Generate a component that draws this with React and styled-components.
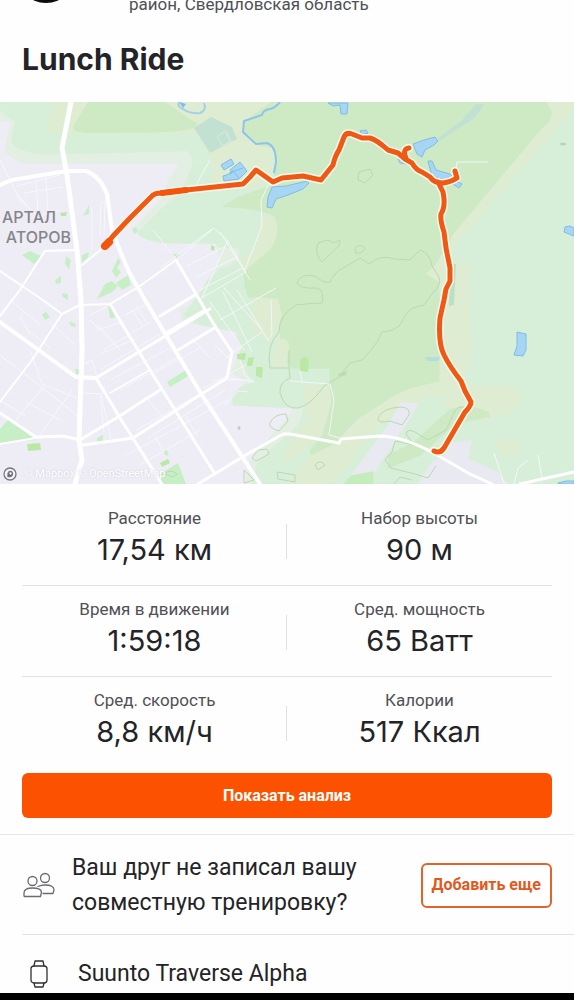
import React from "react";
import styled, { createGlobalStyle } from "styled-components";

const stats = [
  { label: "Расстояние", value: "17,54 км" },
  { label: "Набор высоты", value: "90 м" },
  { label: "Время в движении", value: "1:59:18" },
  { label: "Сред. мощность", value: "65 Ватт" },
  { label: "Сред. скорость", value: "8,8 км/ч" },
  { label: "Калории", value: "517 Ккал" },
];

const routePath =
  "M104 247 L113 236 L130 218 L151 197 Q154 193 161 193 L186 190 L243 184 L250 177 L256 170 L273 182 L282 178 L303 176 L321 180 L333 165 Q335 156 339 150 L344 137 Q346 132 352 134 L362 138 L370 138 Q377 140 388 150 L398 153 L405 159 L412 163 Q416 170 422 172 L430 177 Q434 183 443 183 Q451 182 457 178 L455 171 M406 158 Q402 149 409 148 M438 182 L443 192 Q446 206 441 214 Q440 220 444 232 L446 248 L450 268 L450 281 L446 289 L444 300 L440 318 Q438 343 444 355 Q450 367 461 381 L465 391 L471 402 Q471 406 465 412 L444 448 Q440 454 434 451";

function RouteMap() {
  return (
    <MapSvg viewBox="0 102 574 382" role="img" aria-label="Lunch Ride">
      <rect x="0" y="102" width="574" height="382" fill="#d7efd9" />

      {/* land cover */}
      <g transform="translate(0 102) scale(0.366 0.3333)">
        <path
          d="M145 0H760L745 190L740 240L640 290L605 315L755 345Q770 400 740 450L660 515L640 570L590 560L600 500L690 440L700 340Q690 320 605 315L580 300V175Q560 155 555 110L530 95H150Q125 90 130 70Z"
          fill="#deedd1"
        />
        <path
          d="M545 265L660 255L715 270L640 290L605 315L715 325L700 440L640 480L650 390L540 375Q450 370 450 350Q460 330 505 290Z"
          fill="#d7efd9"
        />
        <path
          d="M240 0H450L540 65Q540 90 400 92L240 93Q195 90 200 75Z"
          fill="#ceeac5"
        />
        <path
          d="M740 0H1495L1508 30Q1510 60 1480 80L1240 395L1190 490L1165 515L1200 540L1205 690Q1205 760 1230 835Q1130 850 1080 880L980 950Q930 1000 925 1020L910 1060H850L845 1045L880 1000L905 900L790 790L760 760Q770 700 760 600L640 580L665 510L740 440Q770 390 750 345Q720 320 605 315L650 285L740 250L755 190L750 140L705 130L665 90L665 60Z"
          fill="#ceeac5"
        />
        <path
          d="M1568 20L1235 440L1225 500L1260 480Q1285 480 1280 520L1285 700Q1295 760 1275 800L1260 845L1400 855Q1440 870 1420 910Q1380 960 1240 965L1200 860L1205 600L1200 540L1165 515L1190 490L1240 395L1480 80Q1510 60 1508 30L1495 0H1568Z"
          fill="#deedd1"
        />
        <path
          d="M1230 835Q1130 850 1080 880L980 950L925 1020L850 1060L780 1149H900L960 1080Q1010 1000 1060 950Q1100 900 1240 870Z"
          fill="#deedd1"
        />
        <path
          d="M1285 910L1335 930L1340 945L1245 965L1150 1060L1060 1100V1060L1130 1020L1230 920Z"
          fill="#ceeac5"
        />
        <path
          d="M0 25L40 60L30 110Q30 150 130 158L500 148Q530 150 525 190L500 260Q400 360 370 400Q400 420 470 425L650 440Q660 480 640 480L560 540Q530 570 550 590L500 640L560 680L650 690L640 740L690 840L630 870L640 920L830 915L815 970L740 1040L700 1090L690 1149H0Z"
          fill="#e4efe4"
        />
        <path
          d="M0 60H30L10 150L60 185H485Q490 190 460 230L440 290L370 370Q360 410 450 425H590L600 470L560 545L545 600L490 620L500 660L600 680L640 690L660 740L630 810L670 840L635 880L630 910L800 920Q780 960 740 1000L680 1080L670 1149H0Z"
          fill="#eeedf6"
        />
        <path
          d="M600 500L660 480L670 560L690 640L740 640L735 800H900V880L830 915H690L700 780L640 680L500 640L560 550Z"
          fill="#d7efd9"
        />
        <path d="M690 585L760 590L770 640L740 720L690 680Z" fill="#deedd1" />
        <path d="M755 715Q790 700 790 740L780 800H740Z" fill="#deedd1" />
        <path
          d="M830 850H900L905 900L880 1000L790 1080H770L790 1020L840 960Z"
          fill="#deedd1"
        />
        <path
          d="M1350 1020Q1385 1000 1420 1015Q1430 1060 1370 1060Z"
          fill="#deedd1"
        />
        <path
          d="M1095 900L1145 905L1120 950L1000 1149H940L1060 970Z"
          fill="#e9eaf1"
        />
        <path
          d="M1215 1060L1230 1020L1290 1015L1280 1070L1360 1110L1390 1149H1140L1180 1080Z"
          fill="#e9eaf1"
        />
        <path d="M935 1149L960 1120L1020 1108V1149Z" fill="#c5edbc" />
      </g>

      {/* parks and yards */}
      <g fill="#c6efc5">
        <path d="M0 429L8 420L32 437L36 440L0 443Z" />
        <path d="M22 255L30 251L41 256L34 264Z" />
        <path d="M66 256L71 260L69 269L65 264Z" />
        <path d="M55 280L61 276L61 283L56 284Z" />
        <path d="M83 216L89 205L89 214Z" />
        <path d="M62 293L68 294L68 300L63 297Z" />
        <path d="M42 314L46 312L50 317L45 320Z" />
        <path d="M69 322L75 323L76 327L71 326Z" />
        <path d="M82 255L89 252L88 257L82 263Z" />
        <path d="M97 299L105 284L112 281L118 286L112 292Z" />
        <path d="M112 271L118 258L121 262L117 268L121 272L116 278Z" />
        <path d="M116 283L128 275L131 285L122 290Z" />
        <path d="M108 306H112L115 318H110Z" />
        <path d="M167 382L186 370L190 375L170 387Z" />
        <path d="M160 474L178 463L186 484H160Z" />
        <path d="M163 451L166 449L169 454L166 456Z" />
        <path d="M132 229L136 227L138 231L134 234Z" />
        <path d="M172 254L180 254L176 259Z" />
        <path d="M75 369H79V374H76Z" />
        <path d="M97 438L103 435V441L97 442Z" />
      </g>
      <g fill="#b9e9a4">
        <path d="M27 444L40 443L41 450L28 451Z" />
        <path d="M160 463L168 459L170 463L162 467Z" />
        <path d="M237 354L246 353L245 360L237 359Z" />
        <path d="M248 358L254 357L252 366L247 366Z" />
        <path d="M256 367L263 367L262 378L256 376Z" />
        <path d="M60 213L67 212L66 216L61 216Z" />
        <path d="M211 245L215 247L214 251L211 250Z" />
        <path d="M300 360Q305 354 309 360L308 372L300 371Z" />
      </g>

      {/* ponds and streams */}
      <g fill="#c3e1d3">
        <path d="M194 128L211 117L232 127L237 139L210 153Z" />
        <path d="M450 264L456 264L454 305L449 306Z" fill="#bddfc5" />
        <path d="M476 104H484Q478 118 462 126L440 141L438 138L460 122Z" />
        <path d="M425 357L440 357L438 361L428 361Z" fill="#b5dcdf" />
      </g>
      <path
        d="M217 136L226 131L231 141L222 146ZM226 133L230 141"
        fill="none"
        stroke="#d7ebd8"
      />
      <g fill="#a7d6f5" stroke="#80bce9">
        <path d="M221 165L231 159L234 164L224 170Z" />
        <path d="M230 170L240 162L247 171L239 179L224 181L223 176L232 173Z" />
        <path d="M232 170L239 178M229 173L243 168" />
        <path d="M267 207L268 197L272 187L286 186L307 181L309 183L303 189L288 195L276 199L272 208Z" />
        <path d="M360 131L366 130L368 133L362 135Z" />
        <path d="M328 103L348 103L347 114L341 114L340 105L333 106Z" />
        <path d="M413 144L424 140L435 137L438 141L434 145L425 150L422 157L417 154Z" />
        <path d="M428 161L432 161L436 170L450 174L458 182L462 184L459 188L450 182L432 176Z" />
        <path d="M398 159L406 159L407 164L400 163Z" />
        <path d="M565 227L570 226L574 228V236L564 232Z" />
        <path d="M517 332L526 334V350L523 356L514 355L517 346Z" />
        <path d="M558 483L566 481H574V484H558Z" />
      </g>
      <path
        d="M280 102Q275 108 270 109Q263 110 262 115L244 121L243 132L256 144L267 143Q276 146 276 162L274 173"
        fill="none"
        stroke="#8fc4ea"
        strokeWidth="2"
      />
      <path
        d="M179 102Q177 107 183 109Q190 114 200 113Q207 110 204 103"
        fill="none"
        stroke="#a3d0e8"
        strokeWidth="2"
      />
      <path d="M179 102L186 104L183 108Z" fill="#80bce9" />

      {/* contour lines */}
      <g fill="none" stroke="#bcd7b5">
        <path d="M289 350V368H270Q266 345 279 332Q279 315 296 305Q312 303 322 303Q324 298 321 290L316 288Q300 289 297 283Q300 273 315 276Q325 284 330 282Q335 272 340 270L360 258Q366 262 369 264Q380 254 395 259L410 260L420 250Q430 253 432 266L439 277Q442 285 432 294L424 305L413 308Q406 312 400 325Q392 332 382 332L377 342Q372 350 362 360L350 363L338 378L324 386Q310 406 298 408Q285 410 280 393Q279 382 290 378L289 368" />
        <path d="M318 243L328 240L334 243L340 240L339 246L328 256L322 262Q314 254 318 243Z" />
        <path d="M355 248Q359 243 365 248Q363 254 356 253Z" />
        <path d="M359 172L370 169L373 175L365 183L358 180Z" />
        <path d="M378 418Q382 408 401 407Q411 408 409 415L402 425L390 421Q377 424 378 418Z" />
        <path d="M406 434Q407 428 415 432L428 440L446 430L454 413Q458 404 466 408M406 434L414 445L395 441L392 452L385 460L391 468L415 474L428 478L436 466" />
        <path d="M315 465Q320 459 325 465L318 470Z" />
        <path d="M270 423Q274 414 286 414L288 421L279 431Q268 428 270 423Z" />
        <path d="M252 458L258 450L267 449L269 454L256 461Z" />
        <path d="M244 470L254 480L244 483Z" />
        <path d="M277 472L295 475V482L278 479ZM394 484L400 477L412 480" />
        <path d="M165 474Q170 468 177 474L173 477Z" />
      </g>
      <path d="M338 374L347 371L346 375L340 377Z" fill="#b7ddb0" />
      <ellipse cx="239" cy="428" rx="1.5" ry="2" fill="#c9cbd1" />
      <ellipse cx="563" cy="144" rx="3" ry="1.5" fill="#b9d4ba" />

      {/* side streets */}
      <g fill="none" stroke="#fafaff" strokeWidth="1" opacity="0.8">
        <path d="M0 160L20 200L38 216L60 210M18 196L28 206M17 186L60 175M36 180L38 213M46 178L48 212M24 193L63 187" />
        <path d="M92 250V208M100 236L101 203L107 200M104 236L105 202M210 160L196 185M268 185L261 200L262 226L244 272" />
        <path d="M153 230L177 260L214 228L227 240L246 272L200 299M212 229L160 268M220 232L250 280M202 298L228 240M187 266L226 246M196 277L237 257M200 290L243 268" />
        <path d="M210 302L244 350M223 292L252 352M237 290L268 340L272 335L271 300M240 360L245 376L254 382L230 378M225 358L262 332M220 320L276 288M224 288L262 330" />
        <path d="M90 315L110 305L140 285M90 320L120 350M97 330L122 322M104 350L150 322M100 354L138 338M100 370L160 334M110 380L170 348M115 342L98 325M125 315L145 305M132 310L142 325M136 306L146 322" />
        <path d="M82 365L92 360L98 380M83 393L101 394L111 438M100 396L104 432M72 390L40 435M30 350L42 384L82 400M0 355L30 378L78 416M45 385L16 420M26 402L60 420M0 400L25 416" />
        <path d="M120 390L180 356M150 375L200 348M137 430L215 385M148 438L225 390M127 455L228 400M140 465L200 430M155 437L164 452M185 415L197 436M145 396L165 420M215 345L232 362M192 338L210 358M225 405L238 391L248 392M204 388L246 365M212 380L250 380" />
        <path d="M20 316L30 335M28 330L50 348M10 300L40 325M50 322L75 345" />
        <path d="M302 381L300 371M290 381L330 384L334 400L329 435L340 438M455 174L457 162H488" />
        <path d="M494 453L504 483M538 455L542 478M528 460L518 468L514 484" />
      </g>

      {/* main streets */}
      <g
        fill="none"
        stroke="#ffffff"
        strokeLinejoin="round"
        strokeLinecap="round"
      >
        <path
          d="M71 102L62 148L67 175L77 250L81 300L82 350L79 440L82 460L75 484"
          strokeWidth="5"
        />
        <path
          d="M0 185L12 180L67 171H86Q100 176 107 194L112 230Q120 252 130 274L145 300L200 392L260 484"
          strokeWidth="4"
        />
        <path d="M0 322L76 377L96 378" strokeWidth="4" />
        <path d="M96 378L152 344L210 309" strokeWidth="3" />
        <path d="M0 413L36 437L63 436L80 440L118 417L160 390" strokeWidth="3" />
        <path d="M0 444L36 438" strokeWidth="2" />
        <path
          d="M0 316L20 290L45 251L78 250M0 271L40 298L62 314L32 360L0 402M62 314L80 305L110 304L140 286L176 260M82 265L104 247"
          strokeWidth="2"
        />
        <path
          d="M176 260L196 294L216 328L232 352L227 378L200 395L133 438L83 445M96 378L120 418L162 484M110 304L150 370L215 474M160 316L195 295M166 333L205 310M178 350L216 327"
          strokeWidth="3"
        />
        <path d="M110 393L150 370" strokeWidth="2" />
        <path
          d="M198 484L244 456L283 434L290 434L339 443L341 439L380 436Q400 436 430 451L470 474L492 484M520 484L574 472"
          strokeWidth="3"
        />
      </g>

      <MapLabel x="56" y="223">
        АРТАЛ
      </MapLabel>
      <MapLabel x="71" y="243">
        АТОРОВ
      </MapLabel>

      <g fill="none" strokeLinecap="round" strokeLinejoin="round">
        <path d={routePath} stroke="#fff8ee" strokeWidth="8" />
        <path d={routePath} stroke="#ee5a14" strokeWidth="5" />
        <path d="M105 246L109 242" stroke="#f4550c" strokeWidth="8" />
        <path d="M162 193L186 190" stroke="#f4550c" strokeWidth="6" />
      </g>
    </MapSvg>
  );
}

function FriendsIcon() {
  return (
    <Icon width="34" height="26" viewBox="0 0 34 26" $color="#6a6a70">
      <circle cx="10.5" cy="9" r="4.5" />
      <circle cx="23" cy="6" r="4.5" />
      <path d="M2 24V21Q2 16 10.5 16T19.5 20L18.5 24.5H2.5Z" />
      <path d="M16 14.5Q19 13 23 13Q32 13 32 18L31 21.5H21" />
    </Icon>
  );
}

function WatchIcon() {
  return (
    <Icon width="20" height="28" viewBox="0 0 20 28" $color="#303035">
      <rect x="2" y="6" width="16" height="17" rx="3" />
      <path d="M5 6L6 1H14L15 6M5 23L6 27H14L15 23" />
    </Icon>
  );
}

function MapboxMark() {
  return (
    <Icon width="14" height="14" viewBox="0 0 14 14" $color="#77777c">
      <circle cx="7" cy="7" r="6" fill="#f4f4f8" />
      <path d="M5 9.5Q4.5 5 7 4.5T9.5 7T5 9.5Z" fill="#66666b" />
      <circle cx="7.5" cy="6.5" r="0.5" stroke="#ffffff" />
    </Icon>
  );
}

function App() {
  return (
    <Page>
      <GlobalStyle />
      <Header>
        <Avatar />
        <Place>район, Свердловская область</Place>
      </Header>
      <Title>Lunch Ride</Title>

      <MapBox>
        <RouteMap />
        <Attribution>
          <MapboxMark />
          <span>© Mapbox © OpenStreetMap</span>
        </Attribution>
      </MapBox>

      <Stats>
        {stats.map((stat) => (
          <Stat key={stat.label}>
            <Label>{stat.label}</Label>
            <Value>{stat.value}</Value>
          </Stat>
        ))}
      </Stats>

      <Analysis>
        <Button $primary>Показать анализ</Button>
      </Analysis>

      <FriendRow>
        <FriendsIcon />
        <FriendText>Ваш друг не записал вашу совместную тренировку?</FriendText>
        <Button>Добавить еще</Button>
      </FriendRow>
      <DeviceRow>
        <WatchIcon />
        <Device>Suunto Traverse Alpha</Device>
      </DeviceRow>
      <SystemBar />
    </Page>
  );
}

const GlobalStyle = createGlobalStyle`
  * {
    box-sizing: border-box;
  }

  body {
    margin: 0;
    background: #fefefe;
  }
`;

const Page = styled.main`
  font-family: Roboto, sans-serif;
  color: #242428;
  overflow: hidden;
`;

const Header = styled.header`
  display: flex;
  align-items: flex-end;
  gap: 53px;
  height: 16px;
  padding: 0 16px;
`;

const Avatar = styled.div`
  flex: none;
  width: 60px;
  height: 60px;
  margin-bottom: 13px;
  border-radius: 50%;
  background: #0c0c0e;
`;

const Place = styled.p`
  margin: 0;
  font-size: 17px;
  line-height: 24px;
  color: #505055;
`;

const Title = styled.h1`
  margin: 24px 22px;
  font-family: Inter, sans-serif;
  font-weight: 700;
  font-size: 30px;
  line-height: 38px;
`;

const MapBox = styled.section`
  position: relative;
`;

const MapSvg = styled.svg`
  display: block;
  width: 100%;
  height: auto;
`;

const MapLabel = styled.text`
  font-family: Inter, sans-serif;
  font-weight: 500;
  font-size: 16px;
  text-anchor: end;
  fill: #85858a;
`;

const Attribution = styled.div`
  position: absolute;
  left: 3px;
  bottom: 2px;
  display: flex;
  align-items: center;
  gap: 7px;
  font-size: 11px;
  line-height: 16px;
  color: #ffffff;
  text-shadow: 0 0 2px #c8c8d0;
`;

const Stats = styled.section`
  display: grid;
  grid-template-columns: 1fr 1fr;
  margin: 11px 22px 0;
`;

const Stat = styled.div`
  position: relative;
  padding: 11px 0 15px;
  text-align: center;
  border-bottom: 1px solid #e2e2e5;

  &:nth-last-child(-n + 2) {
    padding-bottom: 5px;
    border-bottom: none;
  }

  &:nth-child(odd)::after {
    content: "";
    position: absolute;
    top: 29px;
    right: 0;
    width: 1px;
    height: 35px;
    background: #dfdfe3;
  }
`;

const Label = styled.div`
  font-size: 17px;
  line-height: 24px;
  color: #505055;
`;

const Value = styled.div`
  font-family: Inter, Roboto, sans-serif;
  font-size: 29px;
  line-height: 40px;
`;

const Analysis = styled.div`
  display: grid;
  padding: 16px 22px;
  border-bottom: 1px solid #e6e6e9;
`;

const Button = styled.button`
  flex: none;
  height: 45px;
  padding: 0 9px;
  border: ${(props) => (props.$primary ? "none" : "2px solid #e2642d")};
  border-radius: 6px;
  background: ${(props) => (props.$primary ? "#fc5200" : "#fefefe")};
  color: ${(props) => (props.$primary ? "#ffffff" : "#e2591c")};
  font-family: Roboto, sans-serif;
  font-weight: 700;
  font-size: 16px;
  line-height: 24px;
  cursor: pointer;
`;

const Icon = styled.svg`
  flex: none;
  fill: none;
  stroke: ${(props) => props.$color};
  stroke-width: 1.3;
  stroke-linejoin: round;
  stroke-linecap: round;
`;

const FriendRow = styled.section`
  display: flex;
  align-items: center;
  gap: 16px;
  padding: 15px 22px 14px;
`;

const FriendText = styled.p`
  flex: 1;
  margin: 0;
  font-size: 23px;
  line-height: 35px;
`;

const DeviceRow = styled.section`
  display: flex;
  align-items: center;
  gap: 29px;
  margin-left: 22px;
  padding: 20px 7px 0;
  border-top: 1px solid #e2e2e5;
`;

const Device = styled.p`
  margin: 0;
  font-size: 23px;
  line-height: 38px;
`;

const SystemBar = styled.footer`
  height: 8px;
  background: #000000;
`;

export default App;
